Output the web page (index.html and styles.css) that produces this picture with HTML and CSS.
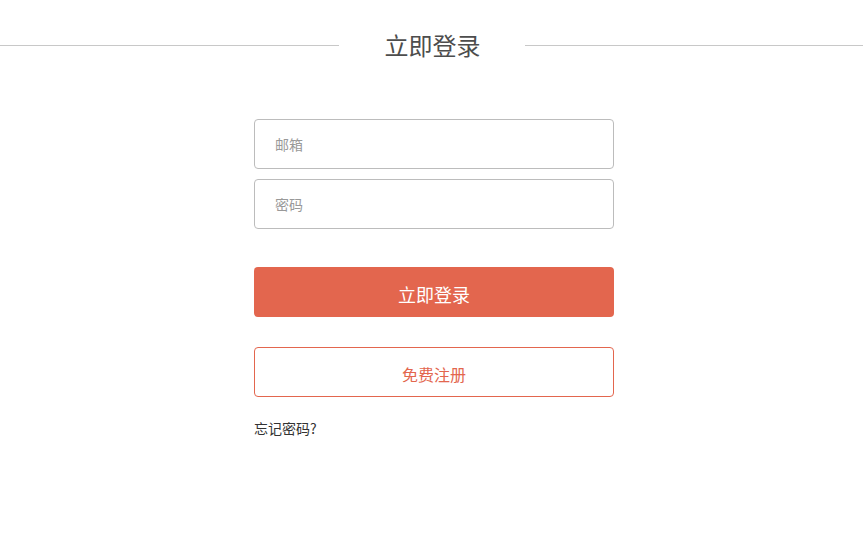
FILE: index.html
```html
<!DOCTYPE html>
<html lang="zh-CN">
<head>
    <meta charset="UTF-8">
    <meta name="viewport" content="width=device-width, initial-scale=1.0">
    <title>立即登录</title>
    <link rel="stylesheet" href="styles.css">
</head>
<body>
    <header class="title-bar">
        <span class="line"></span>
        <h1>立即登录</h1>
        <span class="line"></span>
    </header>
    <form class="login-form">
        <input type="text" class="field" placeholder="邮箱">
        <input type="password" class="field" placeholder="密码">
        <button type="submit" class="btn-login">立即登录</button>
        <a href="#" class="btn-register">免费注册</a>
        <a href="#" class="forgot">忘记密码?</a>
    </form>
</body>
</html>
```

FILE: styles.css
```css
body {
    margin: 0;
    font-family: "Noto Sans CJK SC", "Noto Sans", sans-serif;
    background-color: #fff;
    color: #333;
}
.title-bar {
    display: flex;
    align-items: center;
    padding-top: 28px;
}
.title-bar .line {
    flex: 1;
    height: 1px;
    background-color: #c8c8c8;
}
.title-bar h1 {
    margin: 0;
    padding: 0 44px 0 46px;
    font-size: 24px;
    font-weight: normal;
    line-height: 34px;
    color: #4d4d4d;
}
.login-form {
    width: 360px;
    padding-left: 5px;
    margin: 57px auto 0;
    display: flex;
    flex-direction: column;
}
.field {
    box-sizing: border-box;
    height: 50px;
    margin-bottom: 10px;
    padding: 0 20px;
    border: 1px solid #bcbcbc;
    border-radius: 4px;
    font-family: inherit;
    font-size: 14px;
    color: #333;
    outline: none;
}
.field::placeholder {
    color: #999;
}
.btn-login {
    height: 50px;
    margin-top: 28px;
    padding-top: 5px;
    border: none;
    border-radius: 4px;
    background-color: #e3664e;
    color: #fff;
    font-family: inherit;
    font-size: 18px;
    cursor: pointer;
}
.btn-register {
    box-sizing: border-box;
    height: 50px;
    margin-top: 30px;
    border: 1px solid #e3664e;
    border-radius: 4px;
    color: #e3664e;
    font-size: 16px;
    line-height: 52px;
    text-align: center;
    text-decoration: none;
}
.forgot {
    margin-top: 21px;
    font-size: 14px;
    color: #333;
    text-decoration: none;
    align-self: flex-start;
}
```
